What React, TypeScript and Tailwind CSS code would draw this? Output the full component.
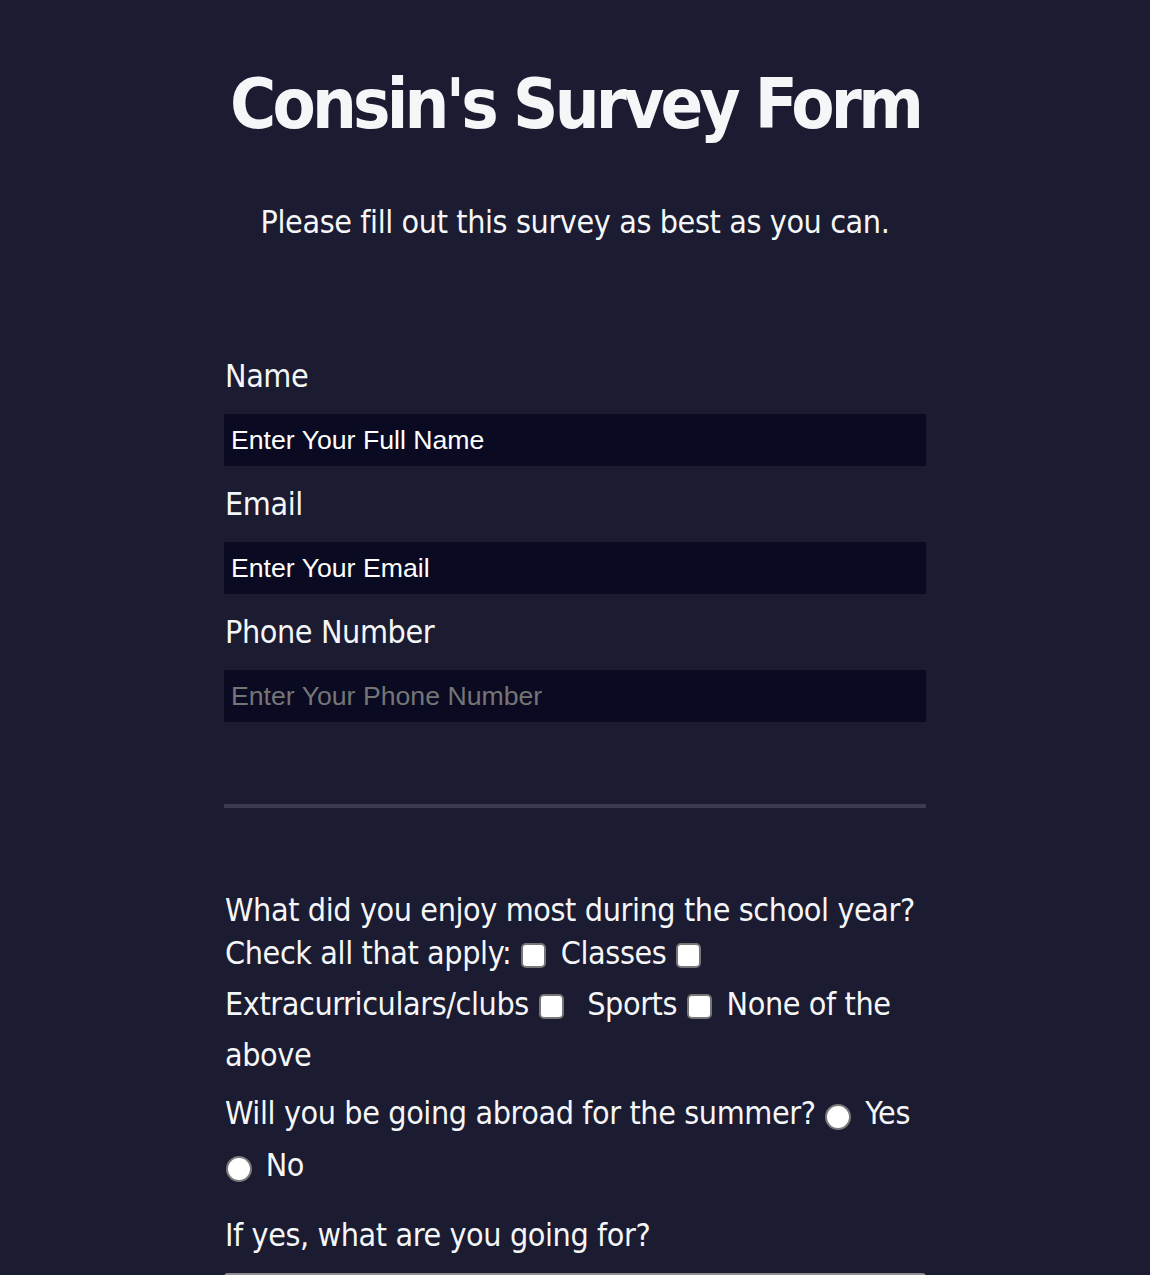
const body = "font-['DejaVu_Sans_Condensed','DejaVu_Sans',sans-serif] [font-stretch:condensed] tracking-[-0.4px]";
const inputFont = "font-['Liberation_Sans',Arial,sans-serif] [font-stretch:normal] tracking-normal";

function Box() {
  return (
    <input
      type="checkbox"
      className="appearance-none inline-block w-[25px] h-[25px] ml-[1px] mr-[6px] mb-[15px] align-[-19px] bg-white border-2 border-[#767676] rounded-[5px]"
    />
  );
}

function Radio() {
  return (
    <input
      type="radio"
      name="abroad"
      className="appearance-none inline-block w-[26px] h-[26px] ml-[1px] mr-[5px] mb-[14px] align-[-20px] bg-white border-2 border-[#7a7a7a] rounded-full"
    />
  );
}

export default function App() {
  return (
    <div className={`min-h-screen bg-[#1b1b32] text-[#f5f6f7] ${body}`}>
      <div className="w-[702px] mx-auto pt-[61px] pb-[60px]">
        <h1 className="text-[70px] leading-[86px] font-bold text-center tracking-[-3.75px] whitespace-nowrap">
          Consin's Survey Form
        </h1>
        <p className="text-[32px] leading-[40px] text-center mt-[55px]">
          Please fill out this survey as best as you can.
        </p>

        <form className="mt-[115px]">
          <div className="flex flex-col gap-[19px]">
            <label htmlFor="name" className="text-[32px] leading-[38px] pl-px">Name</label>
            <input
              id="name"
              type="text"
              defaultValue="Enter Your Full Name"
              className={`h-[52px] w-full bg-[#0a0a23] px-[7px] text-[26.67px] text-white outline-none ${inputFont}`}
            />
            <label htmlFor="email" className="text-[32px] leading-[38px] pl-px">Email</label>
            <input
              id="email"
              type="email"
              defaultValue="Enter Your Email"
              className={`h-[52px] w-full bg-[#0a0a23] px-[7px] text-[26.67px] text-white outline-none ${inputFont}`}
            />
            <label htmlFor="phone" className="text-[32px] leading-[38px] pl-px">Phone Number</label>
            <input
              id="phone"
              type="tel"
              placeholder="Enter Your Phone Number"
              className={`h-[52px] w-full bg-[#0a0a23] px-[7px] text-[26.67px] text-white placeholder:text-[#757575] outline-none ${inputFont}`}
            />
          </div>

          <hr className="mt-[82px] border-0 h-[4px] bg-[#3b3b4f]" />

          <p className="mt-[81px] text-[32px] leading-[43px] pl-px">
            What did you enjoy most during the school year? Check all that apply:{" "}
            <Box /> Classes{" "}
            <Box /> Extracurriculars/clubs{" "}
            <Box />{"\u00a0 "}Sports{" "}
            <Box /> None of the above
          </p>

          <p className="mt-[15px] text-[32px] leading-[43px] pl-px">
            Will you be going abroad for the summer?{" "}
            <Radio /> Yes{" "}
            <Radio /> No
          </p>

          <label htmlFor="purpose" className="block mt-[18px] text-[32px] leading-[43px] pl-px">
            If yes, what are you going for?
          </label>
          <select
            id="purpose"
            className={`mt-[16px] w-full h-[52px] px-[7px] bg-[#f0f0f0] border-2 border-[#8e8e8e] rounded-[4px] text-[26.67px] text-black ${inputFont}`}
          >
            <option>Select an option</option>
          </select>
        </form>
      </div>
    </div>
  );
}
